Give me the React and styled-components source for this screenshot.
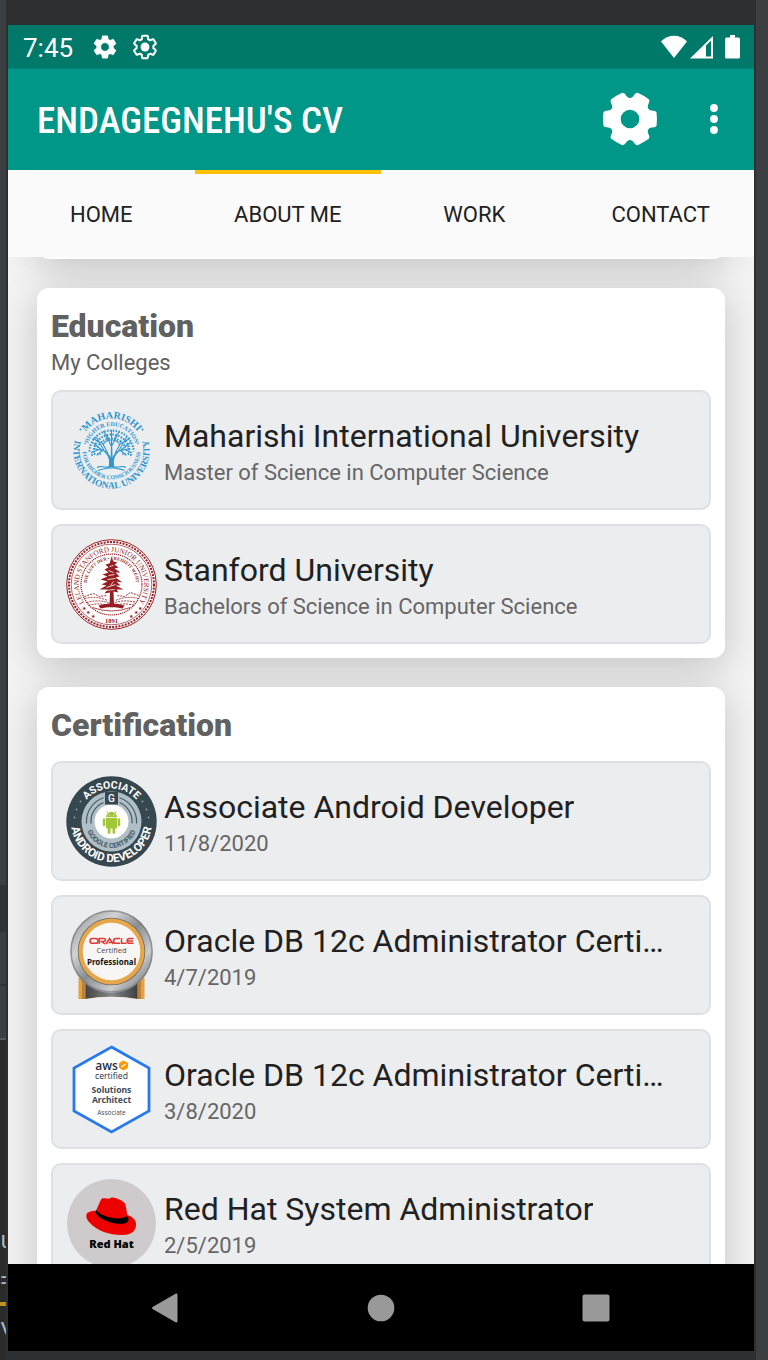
import React from "react";
import styled, { createGlobalStyle } from "styled-components";

const GlobalStyle = createGlobalStyle`
  *, *::before, *::after { box-sizing: border-box; }
  body { margin: 0; background: #3c3f41; }
  body, button, input { font-family: Roboto, "Liberation Sans", sans-serif; }
  h1, h2, h3, p, ul { margin: 0; padding: 0; }
`;

const Desktop = styled.div`
  display: grid;
  grid-template-columns: 6px minmax(0, 1fr) 12px;
  height: 100vh;
  overflow: hidden;
`;

const EditorStrip = styled.div`
  display: flex;
  flex-direction: column;
  min-width: 0;
  overflow: hidden;
  background: #3c3f41;
`;

const StripBlock = styled.div`
  flex: ${(p) => (p.$height ? `0 0 ${p.$height}px` : "1 1 0")};
  background: ${(p) => p.$color};
`;

const StripText = styled.div`
  flex: 0 0 ${(p) => p.$height}px;
  background: #2b2b2b;
  color: #a9b7c6;
  font-family: "Liberation Mono", monospace;
  font-size: 24px;
  line-height: ${(p) => p.$height}px;
`;

const DeviceFrame = styled.div`
  display: flex;
  flex-direction: column;
  min-width: 0;
  min-height: 0;
  padding: 25px 2px 9px;
  background: #2e2f31;
`;

const Screen = styled.div`
  flex: 1;
  display: flex;
  flex-direction: column;
  min-height: 0;
  background: #f3f3f3;
`;

const StatusBar = styled.div`
  flex: none;
  display: flex;
  align-items: center;
  justify-content: space-between;
  height: 44px;
  padding: 0 14px 0 15px;
  background: #00796b;
  border-bottom: 1px solid #008376;
  color: #fff;
  font-size: 26px;
  line-height: 44px;
`;

const Clock = styled.span`
  padding-top: 2px;
`;

const StatusGroup = styled.div`
  display: flex;
  align-items: center;
  gap: ${(p) => p.$gap}px;
`;

const AppBar = styled.header`
  flex: none;
  display: flex;
  align-items: center;
  height: 101px;
  padding: 0 20px 1px 29px;
  background: #009688;
`;

const AppTitle = styled.h1`
  flex: 1;
  padding-top: 3px;
  color: #fff;
  font-family: "Roboto Condensed", "Liberation Sans Narrow", Roboto, sans-serif;
  font-size: 37px;
  font-weight: 500;
  line-height: 44px;
  white-space: nowrap;
`;

const IconButton = styled.button`
  display: flex;
  align-items: center;
  justify-content: center;
  width: ${(p) => p.$width}px;
  height: 60px;
  margin-left: ${(p) => p.$space || 0}px;
  padding: 0;
  border: 0;
  background: none;
`;

const Tabs = styled.nav`
  flex: none;
  display: grid;
  grid-template-columns: repeat(4, 1fr);
  height: 87px;
  background: #fafafa;
`;

const Tab = styled.a`
  display: flex;
  align-items: center;
  justify-content: center;
  padding-bottom: 2px;
  border-top: 4px solid ${(p) => (p.$active ? "#ffc107" : "transparent")};
  color: #212121;
  font-size: 22px;
  text-decoration: none;
`;

const Content = styled.main`
  flex: 1;
  display: flex;
  flex-direction: column;
  gap: 29px;
  min-height: 0;
  padding: 0 29px;
  overflow-y: auto;
  scrollbar-width: none;
`;

const Card = styled.section`
  flex: none;
  padding: 15px 14px 14px;
  border-radius: 12px;
  background: #fff;
  box-shadow: 0 8px 38px rgba(0, 0, 0, 0.2);
`;

const ScrolledCard = styled(Card)`
  margin-top: -58px;
  height: 60px;
`;

const CardTitle = styled.h2`
  color: #616161;
  font-size: 32px;
  font-weight: 900;
  line-height: 46px;
`;

const CardSubtitle = styled.p`
  color: #616161;
  font-size: 22px;
  line-height: 28px;
`;

const Entries = styled.ul`
  display: flex;
  flex-direction: column;
  gap: 14px;
  margin-top: 13px;
  list-style: none;
`;

const Entry = styled.li`
  display: flex;
  align-items: center;
  gap: 7px;
  height: 120px;
  padding: 0 36px 0 13px;
  border: 2px solid #dfe0e1;
  border-radius: 10px;
  background: #ecedef;
`;

const EntryText = styled.div`
  min-width: 0;
  padding-top: 3px;
`;

const EntryTitle = styled.h3`
  overflow: hidden;
  color: #212121;
  font-size: 32px;
  font-weight: 400;
  line-height: 43px;
  text-overflow: ellipsis;
  white-space: nowrap;
`;

const EntryDetail = styled.p`
  color: #666;
  font-size: 22px;
  line-height: 30px;
`;

const Logo = styled.svg`
  flex: none;
  width: 91px;
  height: 91px;
`;

const SystemNav = styled.footer`
  flex: none;
  display: grid;
  grid-template-columns: repeat(3, 1fr);
  align-items: center;
  justify-items: center;
  height: 87px;
  padding: 0 50px;
  background: #000;
`;

const GEAR =
  "M19.14 12.94c.04-.3.06-.61.06-.94 0-.32-.02-.64-.07-.94l2.03-1.58c.18-.14.23-.41.12-.61l-1.92-3.32c-.12-.22-.37-.29-.59-.22l-2.39.96c-.5-.38-1.03-.7-1.62-.94l-.36-2.54c-.04-.24-.24-.41-.48-.41h-3.84c-.24 0-.43.17-.47.41l-.36 2.54c-.59.24-1.13.57-1.62.94l-2.39-.96c-.22-.08-.47 0-.59.22L2.74 8.87c-.12.21-.08.47.12.61l2.03 1.58c-.05.3-.09.63-.09.94s.02.64.07.94l-2.03 1.58c-.18.14-.23.41-.12.61l1.92 3.32c.12.22.37.29.59.22l2.39-.96c.5.38 1.03.7 1.62.94l.36 2.54c.05.24.24.41.48.41h3.84c.24 0 .44-.17.47-.41l.36-2.54c.59-.24 1.13-.56 1.62-.94l2.39.96c.22.08.47 0 .59-.22l1.92-3.32c.12-.22.07-.47-.12-.61l-2.01-1.58z";
const GEAR_HOLE = "M12 15.6c-1.98 0-3.6-1.62-3.6-3.6s1.62-3.6 3.6-3.6 3.6 1.62 3.6 3.6-1.62 3.6-3.6 3.6z";

function GearSolid() {
  return (
    <svg width="28" height="28" viewBox="0 0 24 24" fill="#fff">
      <path fillRule="evenodd" d={GEAR + GEAR_HOLE} stroke="#fff" strokeWidth=".4" />
    </svg>
  );
}

function GearOutline() {
  return (
    <svg width="28" height="28" viewBox="0 0 24 24" fill="#fff">
      <path d={GEAR} fill="none" stroke="#fff" strokeWidth="1.7" strokeLinejoin="round" />
      <circle cx="12" cy="12" r="3.8" />
    </svg>
  );
}

const turn = (x, y, degrees) => {
  const a = (degrees * Math.PI) / 180;
  const px = x * Math.cos(a) - y * Math.sin(a);
  const py = x * Math.sin(a) + y * Math.cos(a);
  return `${px.toFixed(2)} ${py.toFixed(2)}`;
};

const SIX_TEETH =
  `M${turn(20.4, -8.8, 0)}` +
  [0, 60, 120, 180, 240, 300]
    .map(
      (a) =>
        `C${turn(21.8, -8.2, a)} ${turn(25.6, -8.8, a)} ${turn(26.6, -6.4, a)}` +
        `Q${turn(27.2, 0, a)} ${turn(26.6, 6.4, a)}` +
        `C${turn(25.6, 8.8, a)} ${turn(21.8, 8.2, a)} ${turn(20.4, 8.8, a)}` +
        `Q${turn(20, 0, a + 30)} ${turn(20.4, -8.8, a + 60)}`
    )
    .join("") +
  "Z M9.3 0A9.3 9.3 0 1 0 -9.3 0A9.3 9.3 0 1 0 9.3 0Z";

function GearLarge() {
  return (
    <svg width="56" height="56" viewBox="-28 -28 56 56" fill="#fff">
      <path fillRule="evenodd" d={SIX_TEETH} />
    </svg>
  );
}

function MaharishiLogo() {
  const blue = "#2f96cf";
  return (
    <Logo viewBox="-45.5 -45.5 91 91" fill={blue} fontFamily="Liberation Serif, serif" fontWeight="700">
      <defs>
        <path id="miu-top" d="M-32 0A32 32 0 0 1 32 0" />
        <path id="miu-bottom" d="M-31.100 -21.800A38 38 0 1 0 31.100 -21.800" />
        <path id="miu-in-top" d="M-24.500 0A24.500 24.500 0 0 1 24.500 0" />
        <path id="miu-in-bottom" d="M-28.600 -5A29 29 0 1 0 28.600 -5" />
      </defs>
      <text fontSize="10" textAnchor="middle"><textPath href="#miu-top" startOffset="50%">MAHARISHI</textPath></text>
      <text fontSize="9.400" textAnchor="middle"><textPath href="#miu-bottom" startOffset="50%">INTERNATIONAL UNIVERSITY</textPath></text>
      <text fontSize="6" textAnchor="middle"><textPath href="#miu-in-top" startOffset="50%">HIGHER EDUCATION</textPath></text>
      <text fontSize="5.800" textAnchor="middle"><textPath href="#miu-in-bottom" startOffset="50%">FOR HIGHER CONSCIOUSNESS</textPath></text>
      <circle cx="-31" cy="-21" r="1" /><circle cx="31" cy="-21" r="1" />
      <circle cx="-26.500" cy="-7" r=".8" /><circle cx="26.500" cy="-7" r=".8" />
      <path d="M-3 17C-1.500 9 -2.500 5 -9 0L-8 -1C-4 2 -2 4 -.8 7L-.6 -3H.8L1 7C2 4 4 2 8 -1L9 0C2.500 5 1.500 9 3 17Z" />
      <g fill="none" stroke={blue} strokeWidth="1.1" strokeLinecap="round">
        <path d="M-9 0L-18 -2M-9 0L-19 -8M-8 -1L-15 -13M-4 2L-10 -9M0 -2V-20M0 -4L-6 -16M0 -4L6 -16M4 2L10 -9M8 -1L15 -13M9 0L19 -8M9 0L18 -2M-13 -1L-20 2M13 -1L20 2M-3 -12L-8 -19M3 -12L8 -19M-12 -8L-18 -12M12 -8L18 -12M-9 0L-14 4M9 0L14 4" />
        <path strokeLinecap="butt" strokeDasharray="1.500 1.400" d="M-22 1A22 21 0 0 1 22 1M-18 2A18 18 0 0 1 18 2M-14 -3A15 14 0 0 1 14 -3M-20 5C-17 1 -14 6 -11 3M20 5C17 1 14 6 11 3" strokeWidth="2.200" />
        <path strokeDasharray="2 1" d="M-8 -6C-6 -12 6 -12 8 -6M-14 17C-10 14 -5 19 0 15C5 19 10 14 14 17M-13 20Q0 15 13 20" />
      </g>
    </Logo>
  );
}

function StanfordLogo() {
  const red = "#961d22";
  return (
    <Logo viewBox="-45.5 -45.5 91 91" fill={red} fontFamily="Liberation Serif, serif">
      <defs>
        <path id="su-top" d="M-27 18.500A32.700 32.700 0 1 1 27 18.500" />
        <path id="su-in" d="M-23.500 7.600A24.700 24.700 0 1 1 23.500 7.600" />
      </defs>
      <circle r="44.800" fill="#fff" stroke={red} strokeWidth="1" />
      <circle r="42.500" fill="none" stroke={red} strokeWidth="2" strokeDasharray="2 1.200" />
      <circle r="40.300" fill="none" stroke={red} strokeWidth=".7" />
      <circle r="30.500" fill="none" stroke={red} strokeWidth="1.200" strokeDasharray="1.200 .8" />
      <text fontSize="7.200" textAnchor="middle"><textPath href="#su-top" startOffset="50%">LELAND STANFORD JUNIOR UNIVERSITY</textPath></text>
      <text fontSize="4.600" fontWeight="700" textAnchor="middle"><textPath href="#su-in" startOffset="50%">DIE LUFT DER • FREIHEIT WEHT</textPath></text>
      <text x="0" y="38.500" fontSize="6.500" fontWeight="700" textAnchor="middle">1891</text>
      <g fontSize="5" textAnchor="middle">
        <text x="-28" y="25">★</text><text x="-24" y="29.500">★</text><text x="-19" y="33">★</text>
        <text x="28" y="25">★</text><text x="24" y="29.500">★</text><text x="19" y="33">★</text>
      </g>
      <path d="M0 -27L2 -23L6 -22L3 -20L7 -17L3 -16L9 -12L4 -12L8 -8L4 -7L11 -2L5 -3L9 1L4 1L12 5L5 5L7 8L2 7L2.500 20H-2L-1.500 8L-7 9L-4 5L-12 5L-5 1L-10 0L-4 -3L-11 -5L-4 -8L-9 -10L-3 -12L-7 -15L-3 -17L-6 -20L-2 -21Z" />
      <path d="M-3 -14L2 -12M-4 -5L4 -6M-5 3L4 0M-2 -18L2 -19M-6 6L3 5M-3 -9L3 -10M-1 1L2 -3" stroke="#fff" strokeWidth=".8" />
      <g fill="none" stroke={red} strokeWidth=".9" strokeDasharray="2 1">
        <path d="M-27 12L-18 9L-12 12L-5 11M27 11L19 8L13 12L5 11M-27 14Q-15 11 -4 16M27 14Q15 11 4 16M-25 18Q-10 14 0 20Q10 14 25 18M-23 21Q-10 17 0 23Q10 17 23 21" />
      </g>
      <path d="M-13 21Q0 17 13 21L11 24Q0 21 -11 24Z" />
      <path d="M-19 23Q0 30 19 23" fill="none" stroke={red} strokeWidth=".8" />
    </Logo>
  );
}

function AndroidLogo() {
  return (
    <Logo viewBox="-45.5 -45.5 91 91" fontFamily="Roboto, sans-serif" fontWeight="700">
      <defs>
        <path id="aad-top" d="M-33 0A33 33 0 0 1 33 0" />
        <path id="aad-bottom" d="M-39.200 -10.500A40.600 40.600 0 1 0 39.200 -10.500" />
        <path id="aad-in" d="M-25.200 -6A26 26 0 1 0 25.200 -6" />
      </defs>
      <circle r="45.200" fill="#37474f" />
      <circle r="30" fill="#b0bec5" />
      <g fill="none" stroke="#455a64" strokeWidth="1.200">
        <path d="M-25 2A25 25 0 0 1 -8 -23.700M25 2A25 25 0 0 0 8 -23.700M-20.500 2A20.500 20.500 0 0 1 -8 -19M20.500 2A20.500 20.500 0 0 0 8 -19" />
      </g>
      <circle r="17" fill="#fff" />
      <rect x="-6.500" y="-29.500" width="13" height="12.500" fill="#37474f" />
      <g fill="#fff" textAnchor="middle">
        <text x="0" y="-19.700" fontSize="10" fontWeight="500">G</text>
        <text fontSize="10.500"><textPath href="#aad-top" startOffset="50%">ASSOCIATE</textPath></text>
        <text fontSize="11.500"><textPath href="#aad-bottom" startOffset="50%">ANDROID DEVELOPER</textPath></text>
      </g>
      <text fontSize="7" fill="#455a64" textAnchor="middle"><textPath href="#aad-in" startOffset="50%">GOOGLE CERTIFIED</textPath></text>
      <g fill="#90a4ae">
        <circle cx="-31" cy="-20" r=".9" /><circle cx="-35" cy="-12" r=".9" /><circle cx="-37" cy="-4" r=".9" />
        <circle cx="31" cy="-20" r=".9" /><circle cx="35" cy="-12" r=".9" /><circle cx="37" cy="-4" r=".9" />
      </g>
      <g fill="#a4c639">
        <path d="M-5.500 -4.200A5.500 5.500 0 0 1 5.500 -4.200Z" />
        <path d="M-3.500 -8L-4.800 -10.500M3.500 -8L4.800 -10.500" stroke="#a4c639" strokeWidth=".8" />
        <path d="M-5.500 -3.400H5.500V6A1 1 0 0 1 4.500 7H3.800V11A1.400 1.400 0 0 1 1 11V7H-1V11A1.400 1.400 0 0 1 -3.800 11V7H-4.500A1 1 0 0 1 -5.500 6Z" />
        <rect x="-8.700" y="-3.200" width="2.600" height="8" rx="1.300" /><rect x="6.100" y="-3.200" width="2.600" height="8" rx="1.300" />
      </g>
      <circle cx="-2.400" cy="-6.500" r=".6" fill="#fff" /><circle cx="2.400" cy="-6.500" r=".6" fill="#fff" />
    </Logo>
  );
}

function OracleLogo() {
  return (
    <Logo viewBox="-45.5 -45.5 91 91">
      <defs>
        <linearGradient id="ora-ring" x1="0" y1="0" x2="1" y2="1">
          <stop offset="0" stopColor="#8c8f92" /><stop offset=".3" stopColor="#d0d2d4" />
          <stop offset=".5" stopColor="#8b8e91" /><stop offset=".72" stopColor="#c9cbcd" /><stop offset="1" stopColor="#5a5d60" />
        </linearGradient>
        <linearGradient id="ora-base" x1="0" x2="1">
          <stop offset="0" stopColor="#424446" /><stop offset=".5" stopColor="#85878a" /><stop offset="1" stopColor="#3c3e40" />
        </linearGradient>
      </defs>
      <path d="M-33 22H33V43.500H-33Z" fill="#e4a340" />
      <path d="M-28 22V43.500M28 22V43.500" stroke="#bd8135" strokeWidth="3" />
      <path d="M-26 26H26V43.500Q0 39 -26 43.500Z" fill="url(#ora-base)" />
      <path d="M-26 43.500Q0 39 26 43.500Z" fill="#ecedef" />
      <circle cy="-4" r="41.500" fill="url(#ora-ring)" />
      <circle cy="-4" r="40.500" fill="none" stroke="#707376" strokeWidth="1.500" opacity=".6" />
      <circle cy="-4" r="33.800" fill="#6f6a63" />
      <circle cy="-4" r="33" fill="#e6a64b" />
      <circle cy="-4" r="28.800" fill="#f7f6f4" />
      <g fill="none" stroke="#df3b34" strokeWidth="1.500">
        <rect x="-21.500" y="-17" width="8" height="4.800" rx="2.400" />
        <path d="M-12.300 -11.500V-17H-7.500Q-6 -17 -6 -15.500T-7.500 -14H-10L-6.500 -11.500M-5.500 -11.500L-2 -17L1.800 -11.500M-3 -13H.5M8.500 -17H4.500A2.400 2.400 0 0 0 4.500 -12.200H8.500M10 -17.500V-12.200H15M22 -17H18A2.400 2.400 0 0 0 18 -12.200H22M16.500 -14.600H21.500" />
      </g>
      <g textAnchor="middle">
        <text x="0" y="-3" fill="#4c4c4c" fontSize="7.600" fontFamily="Open Sans, sans-serif">Certified</text>
        <text x="0" y="9.200" fill="#111" fontSize="8" fontWeight="700" fontFamily="Noto Sans, sans-serif">Professional</text>
      </g>
    </Logo>
  );
}

function AwsLogo() {
  return (
    <Logo viewBox="-45.5 -45.5 91 91" fontFamily="Open Sans, sans-serif">
      <path d="M0 -42.500L37.500 -21.500V21.500L0 42.500L-37.500 21.500V-21.500Z" fill="#fff" stroke="#2679ee" strokeWidth="2.800" />
      <g textAnchor="middle" fill="#232f3e">
        <text x="-5" y="-20" fontSize="12" fontWeight="600">aws</text>
        <text x="0" y="-11" fontSize="8.600">certified</text>
        <g fill="#414c5a" fontWeight="700" fontSize="8.600" fontFamily="Noto Sans, sans-serif">
          <text x="0" y="3.500">Solutions</text>
          <text x="0" y="13.500">Architect</text>
        </g>
        <text x="0" y="25" fontSize="6.500" fill="#414c5a">Associate</text>
      </g>
      <path d="M12 -28.500L16 -26.200V-21.800L12 -19.500L8 -21.800V-26.200Z" fill="#f90" stroke="#f90" strokeLinejoin="round" />
      <path d="M10 -22.500L14 -25.500" stroke="#fff" strokeWidth="1.200" />
    </Logo>
  );
}

function RedHatLogo() {
  return (
    <Logo viewBox="-45.5 -45.5 91 91">
      <circle r="44.500" fill="#cfcacb" />
      <path d="M-24.500 -10C-25.500 -9 -26 -5 -22 -1C-14 8 0 12 11 11.500C20 11.500 25 7 24.500 0C24 -5 19 -7.500 16 -8.500L-14 -13C-18 -13 -23 -12 -24.500 -10Z" fill="#e00" />
      <path d="M-15 -14L-10.500 -24C-9 -27 -2 -23.500 -1 -25.500C3 -27.500 12 -22 13.500 -20C14.500 -18 15.500 -10 16 -7L0 -3Z" fill="#e00" />
      <path d="M-15 -14C-13 -8 6 -1.500 16 -7.500C18 -4 17 -1 14 -.3C2 3 -20 -7 -15 -14Z" fill="#000" />
      <text x="0" y="24.500" textAnchor="middle" fontFamily="Open Sans, sans-serif" fontWeight="800" fontSize="11" fill="#000">Red Hat</text>
    </Logo>
  );
}

const colleges = [
  { title: "Maharishi International University", detail: "Master of Science in Computer Science", Mark: MaharishiLogo },
  { title: "Stanford University", detail: "Bachelors of Science in Computer Science", Mark: StanfordLogo },
];

const certificates = [
  { title: "Associate Android Developer", detail: "11/8/2020", Mark: AndroidLogo },
  { title: "Oracle DB 12c Administrator Certified Professional", detail: "4/7/2019", Mark: OracleLogo },
  { title: "Oracle DB 12c Administrator Certified Professional", detail: "3/8/2020", Mark: AwsLogo },
  { title: "Red Hat System Administrator", detail: "2/5/2019", Mark: RedHatLogo },
];

function EntryList({ items }) {
  return (
    <Entries>
      {items.map(({ title, detail, Mark }) => (
        <Entry key={title + detail}>
          <Mark />
          <EntryText>
            <EntryTitle>{title}</EntryTitle>
            <EntryDetail>{detail}</EntryDetail>
          </EntryText>
        </Entry>
      ))}
    </Entries>
  );
}

export default function App() {
  return (
    <>
      <GlobalStyle />
      <Desktop>
        <EditorStrip aria-hidden="true">
          <StripBlock $color="#3c3f41" />
          <StripBlock $height={47} $color="#313234" />
          <StripBlock $height={52} $color="#3c3f42" />
          <StripBlock $height={2} $color="#313234" />
          <StripBlock $height={52} $color="#3c3f42" />
          <StripBlock $height={2} $color="#55575a" />
          <StripBlock $height={182} $color="#2b2b2b" />
          <StripText $height={40}>u</StripText>
          <StripText $height={40}>=</StripText>
          <StripBlock $height={4} $color="#be9117" />
          <StripText $height={46}>v</StripText>
          <StripBlock $height={8} $color="#2b2b2b" />
        </EditorStrip>
        <DeviceFrame>
          <Screen>
            <StatusBar>
              <StatusGroup $gap={12}>
                <StatusGroup $gap={18}>
                  <Clock>7:45</Clock>
                  <GearSolid />
                </StatusGroup>
                <GearOutline />
              </StatusGroup>
              <StatusGroup $gap={12}>
                <svg width="52" height="24" viewBox="0 0 52 24" fill="#fff">
                  <path d="M13 23L0 6.500C7 -1.300 19 -1.300 26 6.500Z" />
                  <path fillRule="evenodd" d="M29 23.500L52 1V23.500ZM45 10.500V21.500H50V5.500Z" />
                </svg>
                <svg width="15" height="24" viewBox="0 0 15 24" fill="#fff">
                  <path d="M5 0H10V2.500H13.500Q15 2.500 15 4V22Q15 23.500 13.500 23.500H1.500Q0 23.500 0 22V4Q0 2.500 1.500 2.500H5Z" />
                </svg>
              </StatusGroup>
            </StatusBar>
            <AppBar>
              <AppTitle>ENDAGEGNEHU'S CV</AppTitle>
              <IconButton $width={56} aria-label="Settings">
                <GearLarge />
              </IconButton>
              <IconButton $width={40} $space={36} aria-label="More options">
                <svg width="8" height="30" viewBox="0 0 8 30" fill="#fff">
                  <circle cx="4" cy="4" r="3.900" />
                  <circle cx="4" cy="15" r="3.900" />
                  <circle cx="4" cy="26" r="3.900" />
                </svg>
              </IconButton>
            </AppBar>
            <Tabs>
              <Tab href="#home">HOME</Tab>
              <Tab href="#about" $active>ABOUT ME</Tab>
              <Tab href="#work">WORK</Tab>
              <Tab href="#contact">CONTACT</Tab>
            </Tabs>
            <Content>
              <ScrolledCard />
              <Card>
                <CardTitle>Education</CardTitle>
                <CardSubtitle>My Colleges</CardSubtitle>
                <EntryList items={colleges} />
              </Card>
              <Card>
                <CardTitle>Certification</CardTitle>
                <EntryList items={certificates} />
              </Card>
            </Content>
            <SystemNav>
              <IconButton $width={60} aria-label="Back">
                <svg width="28" height="30" viewBox="0 0 28 30" fill="#999">
                  <path d="M1 13.800L23.500 .8Q25.500 0 25.500 2V28Q25.500 30 23.500 29.200L1 16.200Q-1 15 1 13.800Z" />
                </svg>
              </IconButton>
              <IconButton $width={60} aria-label="Home">
                <svg width="28" height="28" viewBox="0 0 28 28" fill="#999"><circle cx="14" cy="14" r="13.300" /></svg>
              </IconButton>
              <IconButton $width={60} aria-label="Recent apps">
                <svg width="28" height="28" viewBox="0 0 28 28" fill="#999"><rect x=".5" y=".5" width="27" height="27" rx="2" /></svg>
              </IconButton>
            </SystemNav>
          </Screen>
        </DeviceFrame>
        <EditorStrip aria-hidden="true" />
      </Desktop>
    </>
  );
}
